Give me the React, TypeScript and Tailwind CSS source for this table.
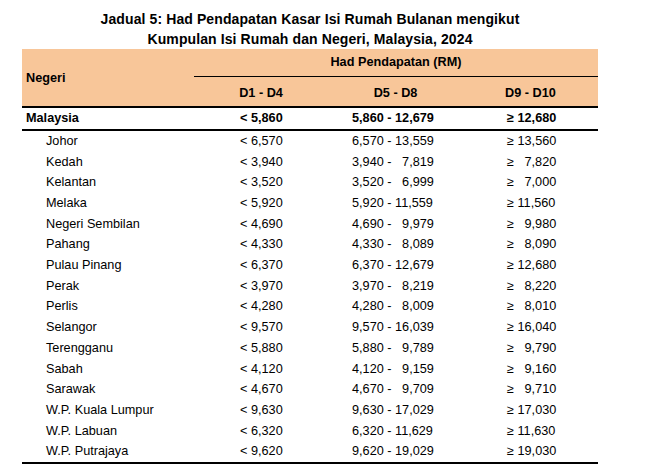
const ROWS: [string, string, string, string][] = [
  ['Johor', '< 6,570', '6,570 - 13,559', '≥ 13,560'],
  ['Kedah', '< 3,940', '3,940 -   7,819', '≥   7,820'],
  ['Kelantan', '< 3,520', '3,520 -   6,999', '≥   7,000'],
  ['Melaka', '< 5,920', '5,920 - 11,559', '≥ 11,560'],
  ['Negeri Sembilan', '< 4,690', '4,690 -   9,979', '≥   9,980'],
  ['Pahang', '< 4,330', '4,330 -   8,089', '≥   8,090'],
  ['Pulau Pinang', '< 6,370', '6,370 - 12,679', '≥ 12,680'],
  ['Perak', '< 3,970', '3,970 -   8,219', '≥   8,220'],
  ['Perlis', '< 4,280', '4,280 -   8,009', '≥   8,010'],
  ['Selangor', '< 9,570', '9,570 - 16,039', '≥ 16,040'],
  ['Terengganu', '< 5,880', '5,880 -   9,789', '≥   9,790'],
  ['Sabah', '< 4,120', '4,120 -   9,159', '≥   9,160'],
  ['Sarawak', '< 4,670', '4,670 -   9,709', '≥   9,710'],
  ['W.P. Kuala Lumpur', '< 9,630', '9,630 - 17,029', '≥ 17,030'],
  ['W.P. Labuan', '< 6,320', '6,320 - 11,629', '≥ 11,630'],
  ['W.P. Putrajaya', '< 9,620', '9,620 - 19,029', '≥ 19,030'],
]

const COLS = 'grid grid-cols-[172px_134px_135px_135px]'

function Row({ cells, bold }: { cells: [string, string, string, string]; bold?: boolean }) {
  return (
    <div
      className={`${COLS} items-center whitespace-pre text-[12.7px] leading-none ${
        bold ? 'h-[21px] font-bold' : 'h-[20.7px]'
      }`}
    >
      <div className={bold ? 'pl-[4px]' : 'pl-[24px]'}>{cells[0]}</div>
      <div className="pl-[46px]">{cells[1]}</div>
      <div className="pl-[24px]">{cells[2]}</div>
      <div className="pl-[44px]">{cells[3]}</div>
    </div>
  )
}

export default function App() {
  return (
    <main className="min-h-screen w-[655px] bg-white pt-[9px] text-black font-['Liberation_Sans',Arial,sans-serif]">
      <div className="ml-[22px] w-[576px]">
        <h1 className="text-center text-[14px] font-bold leading-[20px] tracking-[0.1px]">
          Jadual 5: Had Pendapatan Kasar Isi Rumah Bulanan mengikut
          <br />
          Kumpulan Isi Rumah dan Negeri, Malaysia, 2024
        </h1>

        <div className={`${COLS} h-[57px] bg-[#f8c699] text-[12.7px] font-bold`}>
          <div className="row-span-2 flex items-center pl-[4px] pt-[2px]">Negeri</div>
          <div className="col-span-3 flex h-[28px] items-center justify-center border-b border-black">
            Had Pendapatan (RM)
          </div>
          <div className="flex items-center justify-center">D1 - D4</div>
          <div className="flex items-center justify-center">D5 - D8</div>
          <div className="flex items-center justify-center">D9 - D10</div>
        </div>

        <div className="border-t-2 border-black">
          <Row cells={['Malaysia', '< 5,860', '5,860 - 12,679', '≥ 12,680']} bold />
        </div>

        <div className="border-y-2 border-black">
          {ROWS.map((row) => (
            <Row key={row[0]} cells={row} />
          ))}
        </div>
      </div>
    </main>
  )
}
